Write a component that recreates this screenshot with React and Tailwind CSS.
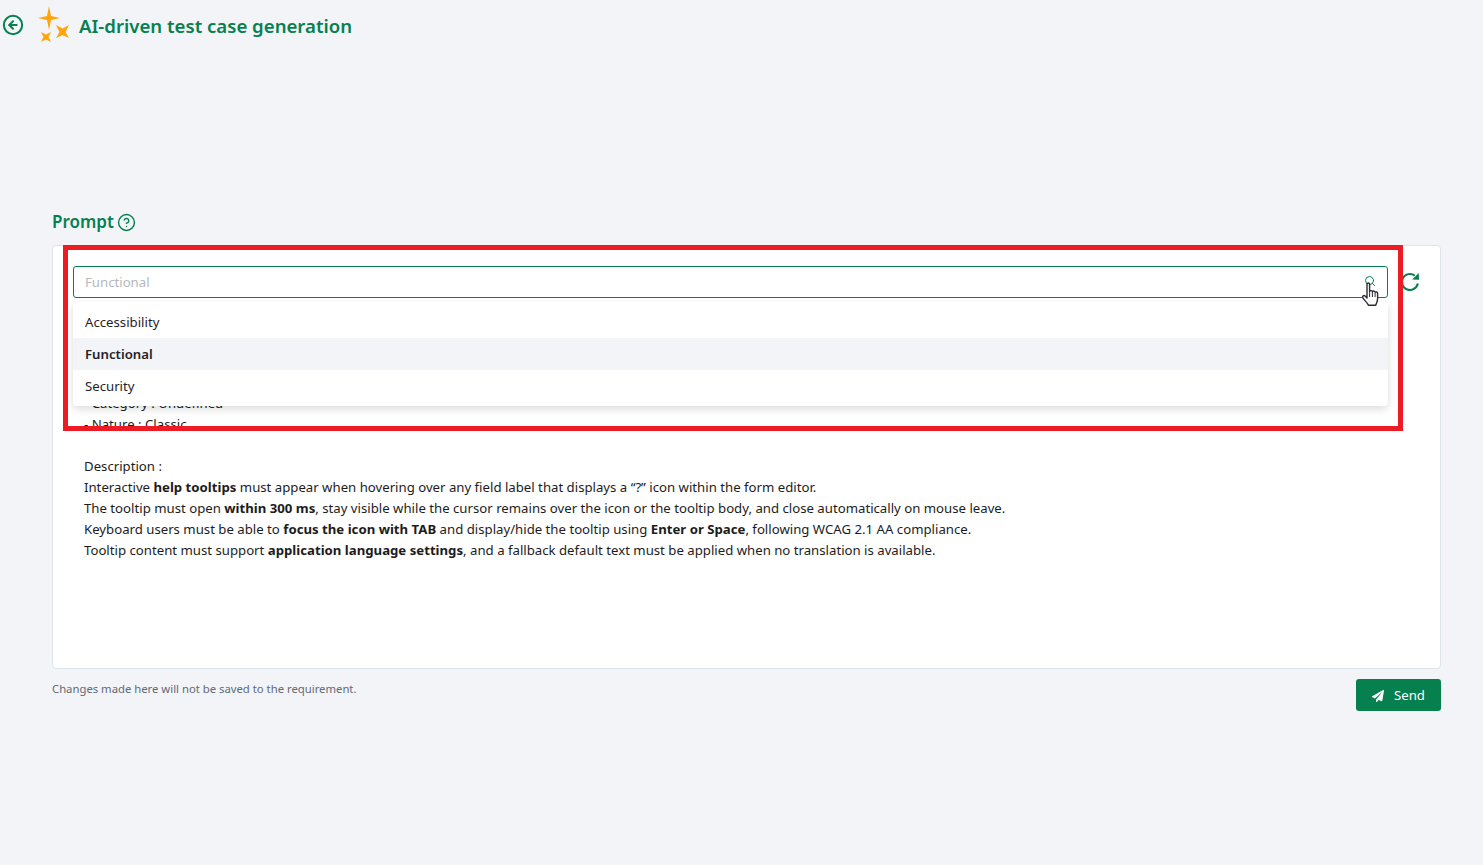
import React from "react";
import { CircleArrowLeft, CircleHelp, Search } from "lucide-react";
import { FaPaperPlane } from "react-icons/fa";

const font = "font-['Noto_Sans','Open_Sans',sans-serif]";

function Stars() {
  return (
    <svg width="36" height="38" viewBox="0 0 36 38" className="shrink-0" aria-hidden="true">
      <path d="M13 1 L15 11 L24 13 L15 15 L13 25 L11 15 L2 13 L11 11 Z" fill="#ffa50a" />
      <path d="M20 20 L26.5 23.5 L33 20 L29.5 27 L33 33 L26.5 30 L20 33 L23.5 27 Z" fill="#ffa50a" />
      <path d="M5 27 L10 29.5 L15 27 L12.5 32 L15 37 L10 34.5 L5 37 L7.5 32 Z" fill="#ffa50a" />
    </svg>
  );
}

function Refresh() {
  return (
    <svg width="22" height="22" viewBox="0 0 22 22" fill="none" aria-hidden="true">
      <path d="M18.8 12.5 A8 8 0 1 1 15.8 4.6" stroke="#06804f" strokeWidth="2" />
      <path d="M13.2 8.6 L20 8.8 L19.8 2 Z" fill="#06804f" />
    </svg>
  );
}

function Hand() {
  return (
    <svg width="20" height="26" viewBox="0 0 20 26" aria-hidden="true">
      <path
        d="M6 2.2c0-1.6 2.6-1.6 2.6 0v7.2c.5-1.2 2.7-1 2.8.3.5-1 2.6-.8 2.7.6.7-.8 2.5-.4 2.5 1v5.5c0 3-1.3 4.2-1.8 6.4H7.4c-.6-2-4.9-6-5.6-7.5-.8-1.6 1-2.8 2.3-1.7L6 16V2.2z"
        fill="#fff"
        stroke="#2b2b35"
        strokeWidth="1.4"
        strokeLinejoin="round"
      />
      <path d="M8.6 10v5M11.4 10v5M14.1 11v4" stroke="#2b2b35" strokeWidth="1" fill="none" />
    </svg>
  );
}

const options = [
  { label: "Accessibility" },
  { label: "Functional", active: true },
  { label: "Security" },
];

export default function App() {
  return (
    <div className={`${font} relative min-h-[865px] bg-[#f2f4f8] text-[13.2px] text-[#1f2329]`}>
      <header className="flex h-[43px] items-start pl-[2px] pt-[7px] text-[#06804f]">
        <CircleArrowLeft size={22} strokeWidth={2.2} className="mt-[7px] shrink-0" />
        <div className="ml-[12px] -mt-[2px]">
          <Stars />
        </div>
        <h1 className="ml-[7px] text-[18.6px] font-semibold leading-[38px]">AI-driven test case generation</h1>
      </header>

      <main className="pl-[52px] pr-[42px] pt-[165px]">
        <div className="flex h-[28px] items-center gap-[3px] text-[#06804f]">
          <span className="text-[17px] font-semibold leading-[26px]">Prompt</span>
          <CircleHelp size={19} strokeWidth={1.8} />
        </div>

        <section className="relative mt-[9px] h-[424px] rounded-[4px] border border-[#dde5ea] bg-white pl-[20px] pr-[19px] pt-[20px]">
          <div className="flex items-center gap-[11px]">
            <div className="flex h-[32px] flex-1 items-center justify-between rounded-[3px] border border-[#06804f] pl-[11px] pr-[11px] text-[#b4b8bc]">
              <span className="pt-[2px]">Functional</span>
              <Search size={12} strokeWidth={2} className="-mt-[2px] text-[#06804f]" />
            </div>
            <Refresh />
          </div>

          <div className="pl-[11px] pt-[95px] leading-[21px] text-[#1c1c1c]">
            <p>- Category : Undefined</p>
            <p>- Nature : Classic</p>
            <p className="mt-[21px]">Description :</p>
            <p>
              Interactive <b>help tooltips</b> must appear when hovering over any field label that displays a “?” icon within the form editor.
            </p>
            <p>
              The tooltip must open <b>within 300 ms</b>, stay visible while the cursor remains over the icon or the tooltip body, and close automatically on mouse leave.
            </p>
            <p>
              Keyboard users must be able to <b>focus the icon with TAB</b> and display/hide the tooltip using <b>Enter or Space</b>, following WCAG 2.1 AA compliance.
            </p>
            <p>
              Tooltip content must support <b>application language settings</b>, and a fallback default text must be applied when no translation is available.
            </p>
          </div>

          <ul className="absolute left-[20px] top-[56px] w-[1315px] rounded-[4px] bg-white py-[4px] shadow-[0_3px_8px_rgba(0,0,0,0.14)]">
            {options.map((o) => (
              <li
                key={o.label}
                className={`flex h-[32px] items-center px-[12px] pt-[2px] ${o.active ? "bg-[#f2f4f8] font-semibold" : ""}`}
              >
                {o.label}
              </li>
            ))}
          </ul>
          <div className="absolute left-[1308px] top-[36px]">
            <Hand />
          </div>
          <div className="pointer-events-none absolute -top-px left-[10px] h-[186px] w-[1340px] border-[5px] border-[#ed1c24]" />
        </section>

        <div className="mt-[10px] flex items-start justify-between">
          <p className="mt-[1px] text-[11.3px] leading-[18px] text-[#5f6b76]">Changes made here will not be saved to the requirement.</p>
          <button className="flex h-[32px] w-[85px] items-center justify-center gap-[10px] rounded-[3px] bg-[#06804f] pt-[2px] text-white">
            <FaPaperPlane size={12} />
            <span>Send</span>
          </button>
        </div>
      </main>
    </div>
  );
}
